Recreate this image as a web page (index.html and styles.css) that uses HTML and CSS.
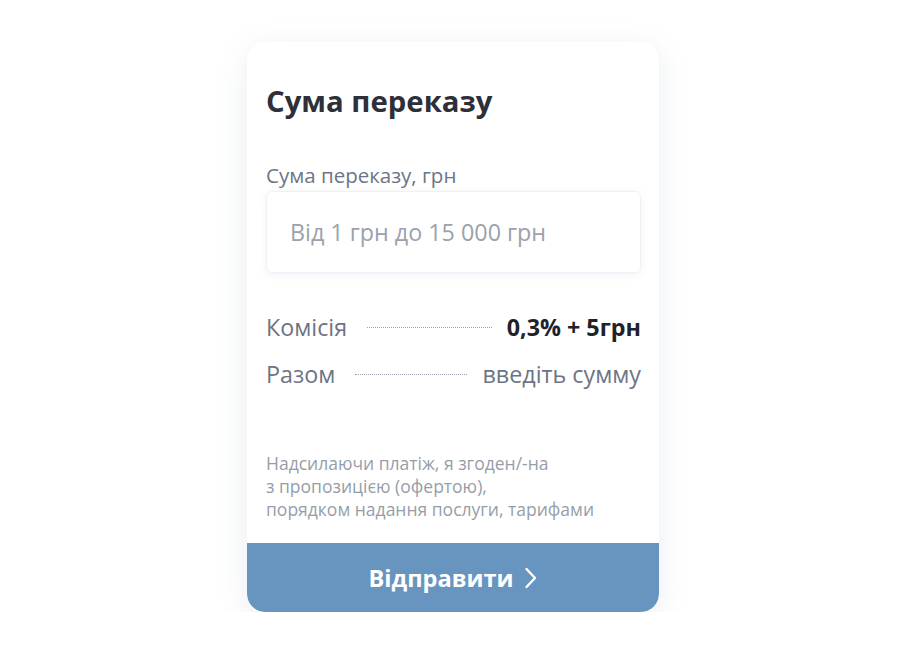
FILE: index.html
```html
<!DOCTYPE html>
<html lang="uk">
<head>
<meta charset="utf-8">
<title>Сума переказу</title>
<link rel="stylesheet" href="styles.css">
</head>
<body>
<div class="card">
  <div class="card-body">
    <h1 class="title">Сума переказу</h1>
    <label class="label" for="amount">Сума переказу, грн</label>
    <div class="input-box">
      <input id="amount" class="input" type="text" placeholder="Від 1 грн до 15 000 грн">
    </div>
    <div class="rows">
      <div class="row">
        <span class="row-name">Комісія</span>
        <span class="dots"></span>
        <span class="row-value strong">0,3% + 5грн</span>
      </div>
      <div class="row">
        <span class="row-name">Разом</span>
        <span class="dots"></span>
        <span class="row-value">введіть сумму</span>
      </div>
    </div>
    <p class="terms">Надсилаючи платіж, я згоден/-на<br>з пропозицією (офертою),<br>порядком надання послуги, тарифами</p>
  </div>
  <button class="submit" type="button">Відправити
    <svg class="chev" width="14" height="22" viewBox="0 0 14 22"><path d="M2.5 2l8.5 9-8.5 9" fill="none" stroke="#fff" stroke-width="2.4" stroke-linecap="round" stroke-linejoin="round"/></svg>
  </button>
</div>
</body>
</html>
```
FILE: styles.css
```css
* { box-sizing: border-box; }
html, body { margin: 0; padding: 0; background: #fff; }
body {
  font-family: "Open Sans", "Noto Sans", sans-serif;
  padding: 42px 0 0 247px;
}
.card {
  width: 412px;
  height: 570px;
  background: #fff;
  border-radius: 18px;
  box-shadow: 0 6px 28px rgba(120, 140, 170, 0.16);
  display: flex;
  flex-direction: column;
  overflow: hidden;
}
.card-body {
  flex: 1;
  padding: 38px 18px 0 19px;
}
.title {
  margin: 0;
  font-size: 29.3px;
  line-height: 42px;
  font-weight: 700;
  color: #2e2f38;
}
.label {
  display: block;
  margin-top: 41px;
  font-size: 20.5px;
  line-height: 24px;
  color: #6b7585;
}
.input-box {
  margin-top: 4px;
  height: 82px;
  border-radius: 6px;
  border: 1px solid #eef1f5;
  box-shadow: 0 2px 8px rgba(120, 140, 170, 0.1);
  display: flex;
  align-items: center;
  padding: 0 23px;
}
.input {
  border: 0;
  outline: 0;
  width: 100%;
  font-family: inherit;
  font-size: 23.3px;
  color: #2e2f38;
  background: transparent;
  padding: 0;
}
.input::placeholder { color: #9aa2ad; }
.rows { margin-top: 37px; }
.row {
  display: flex;
  align-items: center;
  height: 34px;
}
.row + .row { margin-top: 13px; }
.row-name {
  font-size: 23.3px;
  color: #6b7585;
}
.dots {
  flex: 1;
  border-bottom: 1px dotted #9aa2ad;
  margin: 0 15px 0 20px;
}
.row-value {
  font-size: 23.3px;
  color: #6b7585;
}
.row-value.strong { font-weight: 700; color: #1f2228; }
.terms {
  margin: 61px 0 0;
  font-size: 17.5px;
  line-height: 23px;
  color: #959ea8;
}
.submit {
  height: 69px;
  border: 0;
  background: #6795bf;
  color: #fff;
  font-family: inherit;
  font-size: 23.6px;
  font-weight: 700;
  display: flex;
  align-items: center;
  justify-content: center;
  gap: 10px;
  padding: 0;
  border-radius: 0 0 18px 18px;
}
.chev { display: block; }
```
